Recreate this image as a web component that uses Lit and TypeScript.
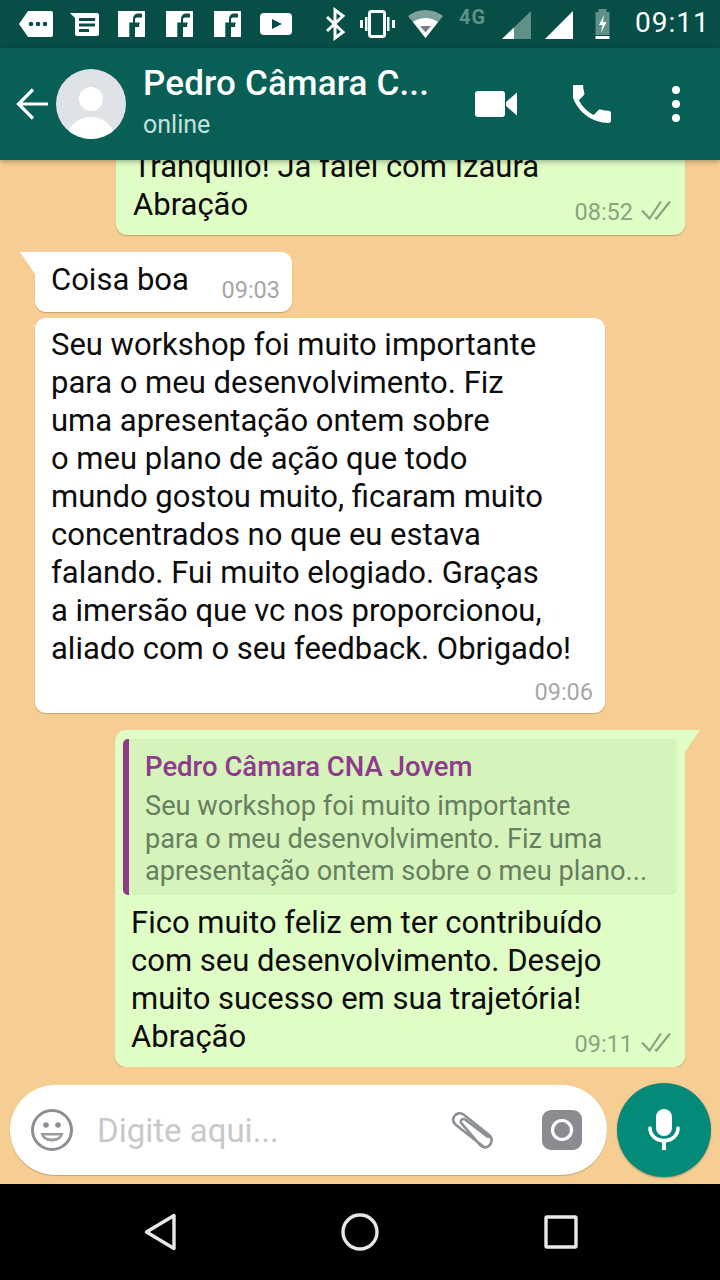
import { LitElement, html, css, svg } from "lit";
import { customElement } from "lit/decorators.js";

const ticks = html`<svg class="ticks" viewBox="0 0 30 20" width="30" height="20" fill="none" stroke="currentColor" stroke-width="2.2">
  <path d="M1 10.5l7.5 8L20 1.5"/><path d="M14 17.5l1.5 1L29 1.5"/>
</svg>`;

const L = (t: string) => html`<span class="l">${t}</span>`;

@customElement("app-root")
export class AppRoot extends LitElement {
  static styles = css`
    :host { display: block; width: 720px; height: 1280px; font-family: Roboto, "Liberation Sans", sans-serif; overflow: hidden; }
    .app { display: flex; flex-direction: column; height: 1280px; background: #f6ce93; }
    .status { height: 48px; flex: none; background: #064e46; display: flex; align-items: flex-start; color: #fff; }
    .status svg { display: block; flex: none; }
    .fourg { font-size: 20px; font-weight: 700; color: #5f9189; width: 43px; margin-left: 14px; line-height: 20px; margin-top: 7px; letter-spacing: 1px; }
    .clock { font-size: 28px; margin-left: 21px; line-height: 48px; letter-spacing: 1px; margin-top: -1px; }
    .header { height: 112px; flex: none; background: #075f56; display: flex; align-items: center; color: #fff; box-shadow: 0 2px 5px rgba(0,0,0,.28); position: relative; z-index: 2; }
    .back { margin-left: 16px; flex: none; }
    .avatar { margin-left: 8px; flex: none; }
    .who { margin-left: 17px; width: 332px; flex: none; display: flex; flex-direction: column; }
    .name { font-size: 35px; font-weight: 500; line-height: 42px; white-space: nowrap; letter-spacing: .15px; margin-top: -6px; }
    .online { font-size: 25px; line-height: 30px; color: #c6e0db; margin-top: 5px; }
    .video { flex: none; }
    .phone { flex: none; margin-left: 56px; }
    .dots { flex: none; margin-left: 56px; }
    .chat { flex: 1; min-height: 0; overflow: hidden; display: flex; flex-direction: column; justify-content: flex-end; align-items: flex-start; }
    .msg { position: relative; box-sizing: border-box; font-size: 31px; line-height: 38px; color: #0c0c0c; border-radius: 11px; box-shadow: 0 1px 1px rgba(90,60,10,.3); flex: none; }
    .l { display: block; white-space: nowrap; }
    .in { background: #fff; margin-left: 35px; }
    .out { background: #dffdc4; margin-left: 115px; width: 570px; }
    .m1 { padding: 0 14px 11px 17px; margin-left: 116px; width: 569px; height: 120px; display: flex; flex-direction: column; justify-content: flex-end; margin-top: 0; }
    .m2 { width: 257px; height: 60px; padding: 9px 12px 0 16px; margin-top: 17px; border-top-left-radius: 0; display: flex; justify-content: space-between; }
    .m3 { width: 570px; padding: 8px 12px 7px 16px; margin-top: 6px; }
    .m4 { padding: 9px 14px 11px 16px; margin-top: 17px; border-top-right-radius: 0; }
    .tail-l::before { content: ""; position: absolute; left: -15px; top: 0; width: 15px; height: 22px; background: #fff; clip-path: polygon(0 0, 100% 0, 100% 100%); }
    .tail-r::before { content: ""; position: absolute; right: -15px; top: 0; width: 15px; height: 22px; background: #dffdc4; clip-path: polygon(0 0, 100% 0, 0 100%); }
    .last { display: flex; justify-content: space-between; align-items: flex-end; }
    .meta { display: flex; align-items: center; gap: 8px; font-size: 23.5px; line-height: 28px; flex: none; white-space: nowrap; }
    .meta .ticks { flex: none; margin-top: -4px; }
    .out .meta { color: #89a480; }
    .in .meta { color: #a6a6a6; }
    .m2 .meta { margin-top: 15px; align-self: flex-start; }
    .m3 .meta { justify-content: flex-end; margin-top: 10px; }
    .last .meta { transform: translateY(2px); }
    .quote { box-sizing: border-box; height: 156px; margin: 0 -6px 9px -8px; background: #d5f3bb; border-left: 6px solid #8d3a8a; border-radius: 5px; padding: 9px 10px 0 16px; }
    .qname { font-size: 27.5px; font-weight: 500; color: #8f3b8d; line-height: 38px; white-space: nowrap; }
    .qtext { font-size: 27.2px; line-height: 32.5px; color: #667f60; margin-top: 4px; }
    .composer { flex: none; height: 101px; padding: 0 9px 0 10px; box-sizing: border-box; display: flex; align-items: flex-start; margin-top: 16px; }
    .pill { width: 597px; height: 90px; margin-top: 2px; background: #fff; border-radius: 45px; box-shadow: 0 1px 1px rgba(90,60,10,.3); display: flex; align-items: center; box-sizing: border-box; padding-left: 21px; flex: none; }
    .ph { font-size: 33px; color: #c9c9c9; width: 354px; margin-left: 24px; flex: none; white-space: nowrap; }
    .pill svg { flex: none; display: block; }
    .cam { margin-left: 47px; }
    .mic { flex: none; width: 94px; height: 94px; border-radius: 50%; background: #038a78; margin-left: 10px; display: flex; align-items: center; justify-content: center; box-shadow: 0 1px 2px rgba(0,0,0,.3); }
    .nav { flex: none; height: 96px; background: #000; display: flex; align-items: center; }
    .nav svg { display: block; flex: none; }
  `;

  render() {
    return html`<div class="app">
      <div class="status">
        <svg width="445" height="48" viewBox="0 0 445 48" fill="#fff">
          <path d="M28 11h23a2 2 0 0 1 2 2v22a2 2 0 0 1-2 2H28L19 24z"/>
          <g fill="#064e46"><circle cx="31" cy="24" r="2.3"/><circle cx="38" cy="24" r="2.3"/><circle cx="45" cy="24" r="2.3"/></g>
          <path d="M70 13h27a2 2 0 0 1 2 2v19a2 2 0 0 1-2 2H77a2 2 0 0 1-2-2V18z"/>
          <g fill="#064e46"><rect x="79" y="18" width="16" height="3"/><rect x="79" y="23.5" width="16" height="3"/><rect x="79" y="29" width="10" height="3"/></g>
          ${[118, 166, 214].map(x => svg`
            <path d="M${x} 11h27v26h-10v-10h4l.6-4.5H${x + 17}v-2.7c0-1.300.4-2.200 2.200-2.200H${x + 24}V13.700c-.6-.1-2-.2-3.400-.2-3.400 0-5.600 2-5.600 5.700v3.300h-3.700V27H${x + 11.300}v10H${x}z"/>`)}
          <path d="M264 13h24a4 4 0 0 1 4 4v14a4 4 0 0 1-4 4h-24a4 4 0 0 1-4-4V17a4 4 0 0 1 4-4z"/>
          <path d="M272 19l10 5-10 5z" fill="#064e46"/>
          <path d="M327 17l16 15-8 6V10l8 6-16 15" fill="none" stroke="#fff" stroke-width="3"/>
          <rect x="369.500" y="11.500" width="15" height="25" rx="2" fill="none" stroke="#fff" stroke-width="3"/>
          <path d="M360 20h3v8h-3zM365 17h2.500v14H365zM387 17h2.500v14H387zM392 20h3v8h-3z"/>
          <path d="M408 16c10-8 25-8 35 0l-17.500 22z" fill="#7fa09b"/>
          <path d="M413 22c8-5.500 17-5.500 25 0l-12.500 16z" fill="#fff"/>
          <path d="M420 26h11l-5.500 6.500z" fill="#7a7f80"/>
        </svg>
        <span class="fourg">4G</span>
        <svg width="71" height="48" viewBox="0 0 71 48">
          <path d="M0 39L29 11v28z" fill="#5f9189"/>
          <path d="M0 39l12-11.600V39z" fill="#fff"/>
          <path d="M43 39L71 11v28z" fill="#fff"/>
        </svg>
        <svg width="41" height="48" viewBox="0 0 41 48" style="margin-left:0">
          <path d="M22 12v-3h9v3h4v26H22z" transform="translate(0 0)" fill="#5f9189" opacity="0"/>
          <path d="M22.500 12h3v-3h8v3h3v23h-14z" fill="#5f9189"/>
          <rect x="22.500" y="36" width="14" height="3" fill="#fff"/>
          <path d="M31 15l-5 10h3.500l-1.500 8 5.500-11h-3.500z" fill="#fff"/>
        </svg>
        <span class="clock">09:11</span>
      </div>
      <div class="header">
        <svg class="back" width="32" height="32" viewBox="0 0 32 32" fill="none" stroke="#fff" stroke-width="3.200"><path d="M32 16H3M17 1.500L2.500 16 17 30.500"/></svg>
        <svg class="avatar" width="70" height="70" viewBox="0 0 70 70">
          <defs><clipPath id="av"><circle cx="35" cy="35" r="35"/></clipPath></defs>
          <circle cx="35" cy="35" r="35" fill="#dfe3e8"/>
          <g clip-path="url(#av)" fill="#fff"><circle cx="35" cy="30" r="12"/><ellipse cx="35" cy="70" rx="24" ry="22"/></g>
        </svg>
        <div class="who">
          <span class="name">Pedro Câmara C...</span>
          <span class="online">online</span>
        </div>
        <svg class="video" width="42" height="26" viewBox="0 0 42 26" fill="#fff">
          <rect x="0" y="0" width="30" height="26" rx="3"/><path d="M31 11l11-9.500v23L31 15z"/>
        </svg>
        <svg class="phone" width="38" height="38" viewBox="4 4 17 17" fill="#fff">
          <path d="M6.620 10.790c1.440 2.830 3.760 5.140 6.590 6.590l2.200-2.200c.27-.27.67-.36 1.020-.24 1.120.37 2.330.57 3.570.57.550 0 1 .45 1 1V20c0 .55-.45 1-1 1C10.610 21 3 13.390 3 4c0-.55.45-1 1-1h3.500c.55 0 1 .45 1 1 0 1.250.2 2.450.57 3.570.11.350.03.740-.25 1.020z" transform="translate(0 0)"/>
        </svg>
        <svg class="dots" width="18" height="36" viewBox="0 0 18 36" fill="#fff"><circle cx="9" cy="4" r="4"/><circle cx="9" cy="18" r="4"/><circle cx="9" cy="32" r="4"/></svg>
      </div>
      <div class="chat">
        <div class="msg out m1">
          ${L("Tranquilo! Já falei com Izaura")}
          <div class="last"><span class="l">Abração</span><span class="meta">08:52 ${ticks}</span></div>
        </div>
        <div class="msg in m2 tail-l">
          <span class="l">Coisa boa</span><span class="meta">09:03</span>
        </div>
        <div class="msg in m3">
          ${["Seu workshop foi muito importante", "para o meu desenvolvimento. Fiz", "uma apresentação ontem sobre", "o meu plano de ação que todo", "mundo gostou muito, ficaram muito", "concentrados no que eu estava", "falando. Fui muito elogiado. Graças", "a imersão que vc nos proporcionou,", "aliado com o seu feedback. Obrigado!"].map(L)}
          <div class="meta">09:06</div>
        </div>
        <div class="msg out m4 tail-r">
          <div class="quote">
            <div class="qname">Pedro Câmara CNA Jovem</div>
            <div class="qtext">
              ${["Seu workshop foi muito importante", "para o meu desenvolvimento. Fiz uma", "apresentação ontem sobre o meu plano..."].map(L)}
            </div>
          </div>
          ${["Fico muito feliz em ter contribuído", "com seu desenvolvimento. Desejo", "muito sucesso em sua trajetória!"].map(L)}
          <div class="last"><span class="l">Abração</span><span class="meta">09:11 ${ticks}</span></div>
        </div>
      </div>
      <div class="composer">
        <div class="pill">
          <svg width="42" height="42" viewBox="0 0 42 42" fill="none" stroke="#8c9094" stroke-width="3">
            <circle cx="21" cy="21" r="19.500"/>
            <circle cx="15" cy="16" r="2.800" fill="#8c9094" stroke="none"/><circle cx="27" cy="16" r="2.800" fill="#8c9094" stroke="none"/>
            <path d="M9.500 24h23c-1 5-5.500 8.500-11.500 8.500S10.500 29 9.500 24z" fill="#9a9da0" stroke="none"/>
            <path d="M13 26.500h16c-1.500 2-4.500 3-8 3s-6.500-1-8-3z" fill="#fff" stroke="none"/>
          </svg>
          <span class="ph">Digite aqui...</span>
          <svg width="44" height="40" viewBox="0 0 44 40" fill="none" stroke="#8c9094" stroke-width="2.600" stroke-linecap="round">
            <path d="M33 37L5 15c-3-2.500-3.500-6-1.500-9s6-3.500 9-1.500l25 20c3 2.500 4 6 2 9.500s-6 4.500-9.500 2L11 14c-1.500-1.200-1.500-3-.6-4s2.600-1.200 4-.2L37 27"/>
          </svg>
          <svg class="cam" width="40" height="40" viewBox="0 0 40 40">
            <rect width="40" height="40" rx="9" fill="#8a8c92"/>
            <circle cx="20" cy="20" r="9.500" fill="none" stroke="#fff" stroke-width="3.200"/>
          </svg>
        </div>
        <div class="mic">
          <svg width="32" height="42" viewBox="0 0 32 42" fill="none" stroke="#fff">
            <rect x="8" y="0" width="16" height="27" rx="8" fill="#fff" stroke="none"/>
            <path d="M2 19c0 7.500 6 12.500 14 12.500S30 26.500 30 19" stroke-width="3.600" stroke-linecap="round"/>
            <path d="M16 31v10" stroke-width="4"/>
          </svg>
        </div>
      </div>
      <div class="nav">
        <svg style="margin-left:143px" width="36" height="40" viewBox="0 0 36 40" fill="none" stroke="#e8e8e8" stroke-width="3.400" stroke-linejoin="round"><path d="M3.500 20L31 3.500v33z"/></svg>
        <svg style="margin-left:161px" width="40" height="40" viewBox="0 0 40 40" fill="none" stroke="#e8e8e8" stroke-width="3.400"><circle cx="20" cy="20" r="17"/></svg>
        <svg style="margin-left:163px" width="36" height="36" viewBox="0 0 36 36" fill="none" stroke="#e8e8e8" stroke-width="3.400" stroke-linejoin="round"><rect x="3" y="3" width="30" height="30" rx="1"/></svg>
      </div>
    </div>`;
  }
}
